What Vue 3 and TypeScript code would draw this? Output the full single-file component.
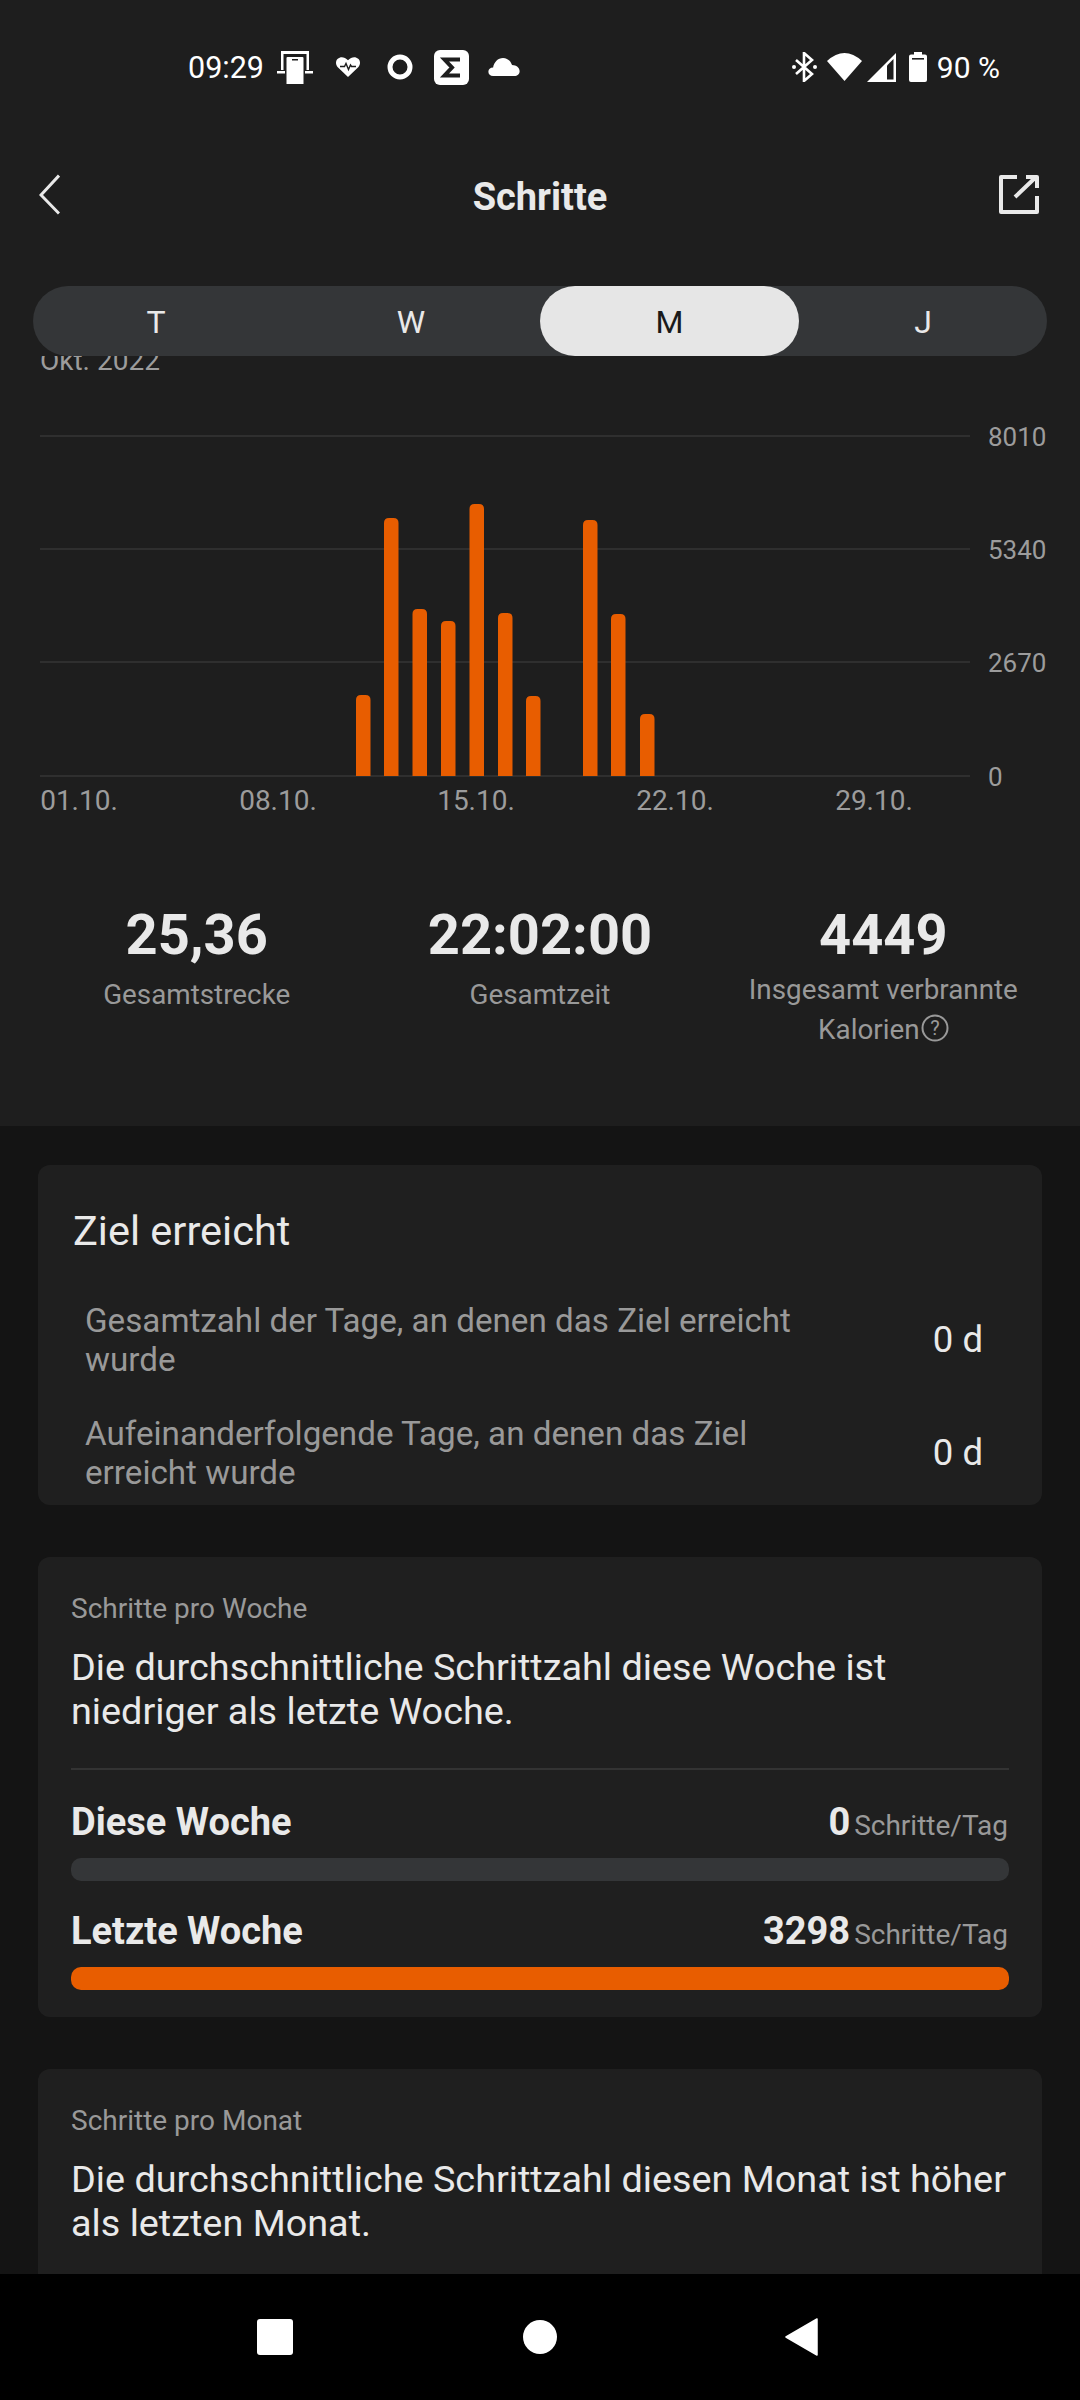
<script setup lang="ts">
const tabs = ['T', 'W', 'M', 'J']
const activeTab = 'M'

const barWidth = 14.5
const baseY = 420
const bars = [
  { x: 356, top: 339 },
  { x: 384, top: 162 },
  { x: 412.5, top: 253 },
  { x: 441, top: 265 },
  { x: 469.5, top: 148 },
  { x: 498, top: 257 },
  { x: 526, top: 340 },
  { x: 583, top: 164 },
  { x: 611, top: 258 },
  { x: 640, top: 358 },
]
const gridLines = [
  { y: 80, label: '8010' },
  { y: 193, label: '5340' },
  { y: 306, label: '2670' },
  { y: 420, label: '0' },
]
const dates = [
  { x: 79, label: '01.10.' },
  { x: 278, label: '08.10.' },
  { x: 476, label: '15.10.' },
  { x: 675, label: '22.10.' },
  { x: 874, label: '29.10.' },
]
function barPath(x: number, top: number) {
  const r = 5
  return `M${x} ${baseY}V${top + r}Q${x} ${top} ${x + r} ${top}H${x + barWidth - r}Q${x + barWidth} ${top} ${x + barWidth} ${top + r}V${baseY}Z`
}

const goalRows = [
  { text: 'Gesamtzahl der Tage, an denen das Ziel erreicht wurde', value: '0 d' },
  { text: 'Aufeinanderfolgende Tage, an denen das Ziel erreicht wurde', value: '0 d' },
]
</script>

<template>
  <div class="phone">
    <div class="top">
      <div class="status">
        <div class="status-left">
          <span class="clock">09:29</span>
          <svg class="i-phone" width="36" height="33" viewBox="0 0 36 33" fill="#fff">
            <path d="M4 0h28v19h-2.500V3H6.500V19H4z" />
            <path d="M0 20h8v2.500H0zM28 20h8v2.500h-8z" />
            <path d="M10.500 6h15a1 1 0 0 1 1 1V33h-17V7a1 1 0 0 1 1-1z" />
            <rect x="15" y="8" width="6" height="1.500" fill="#1e1e1e" />
          </svg>
          <svg class="i-heart" width="24" height="20" viewBox="0 0 24 20">
            <path fill="#fff" d="M12 20 1.800 10.200C-.6 7.700-.6 3.800 1.800 1.700 4.300-.6 8.500-.5 12 3.200 15.500-.5 19.700-.6 22.200 1.700c2.400 2.100 2.400 6 0 8.500z" />
            <path fill="none" stroke="#1e1e1e" stroke-width="1.400" d="M4 9.500h4.500l1.500-3 2.500 6 2-4.500 1 1.500H20" />
          </svg>
          <svg class="i-ring" width="26" height="26" viewBox="0 0 26 26">
            <circle cx="13" cy="13" r="10" fill="none" stroke="#fff" stroke-width="5" />
          </svg>
          <svg class="i-sigma" width="35" height="35" viewBox="0 0 35 35">
            <rect width="35" height="35" rx="6" fill="#fff" />
            <path fill="none" stroke="#1e1e1e" stroke-width="4" d="M26 9.500H10.500l7.500 8-7.500 8H26" />
          </svg>
          <svg class="i-cloud" width="32" height="18" viewBox="0 0 33 19" fill="#fff">
            <path d="M5 19C2 19 0 17 0 14.500S2 10 5 10c1-5.500 5-10 10.500-10C20 0 23.500 3 25 7.500c4.500 0 8 3 8 6.500 0 3-2.500 5-5.500 5z" />
          </svg>
        </div>
        <div class="status-right">
          <svg width="25" height="30" viewBox="0 0 25 30">
            <path fill="none" stroke="#fff" stroke-width="2.600" d="M4 8l16 14-8 7V1l8 7L4 22" />
            <circle cx="2" cy="15" r="2" fill="#fff" />
            <circle cx="23" cy="15" r="2" fill="#fff" />
          </svg>
          <svg class="i-wifi" width="35" height="28" viewBox="0 0 35 28" fill="#fff">
            <path d="M0 8Q17.500-8 35 8L17.500 28z" />
          </svg>
          <svg class="i-signal" width="29" height="29" viewBox="0 0 29 29">
            <path fill="#fff" d="M29 0v29H0z" />
            <path fill="#1e1e1e" d="M26.500 6v20.500H20V12.500z" />
          </svg>
          <svg class="i-battery" width="18" height="30" viewBox="0 0 18 30">
            <path fill="#fff" d="M5 0h8v2.500h3a2 2 0 0 1 2 2V28a2 2 0 0 1-2 2H2a2 2 0 0 1-2-2V4.500a2 2 0 0 1 2-2h3z" />
            <rect x="3" y="6" width="12" height="1.600" fill="#1e1e1e" />
          </svg>
          <span class="percent">90 %</span>
        </div>
      </div>

      <div class="header">
        <svg class="back" width="21" height="41" viewBox="0 0 21 41">
          <path fill="none" stroke="#e9e9e9" stroke-width="3" d="M20 1.500 2 21l18 18.500" />
        </svg>
        <span class="title">Schritte</span>
        <svg class="share" width="40" height="39" viewBox="0 0 40 39" fill="none" stroke="#e9e9e9" stroke-width="4" stroke-linejoin="round">
          <path d="M18 2H2v35h36V21" />
          <path d="M16 22 37 2M27 2h11v11" />
        </svg>
      </div>

      <div class="tabs">
        <div v-for="tab in tabs" :key="tab" class="tab" :class="{ active: tab === activeTab }">{{ tab }}</div>
      </div>

      <svg class="chart" width="1080" height="466" viewBox="0 0 1080 466">
        <text x="40" y="14" class="axis">Okt. 2022</text>
        <template v-for="line in gridLines" :key="line.y">
          <line x1="40" x2="970" :y1="line.y" :y2="line.y" stroke="#2f2f2f" stroke-width="2" />
          <text x="988" :y="line.y + 10" class="axis small">{{ line.label }}</text>
        </template>
        <path v-for="bar in bars" :key="bar.x" :d="barPath(bar.x, bar.top)" fill="#e85d00" />
        <text v-for="date in dates" :key="date.x" :x="date.x" y="454" text-anchor="middle" class="axis">{{ date.label }}</text>
      </svg>

      <div class="stats">
        <div class="stat">
          <div class="stat-value">25,36</div>
          <div class="stat-label">Gesamtstrecke</div>
        </div>
        <div class="stat">
          <div class="stat-value">22:02:00</div>
          <div class="stat-label">Gesamtzeit</div>
        </div>
        <div class="stat">
          <div class="stat-value">4449</div>
          <div class="stat-label">
            Insgesamt verbrannte<br />Kalorien<svg class="help" width="28" height="28" viewBox="0 0 28 28">
              <circle cx="14" cy="14" r="12.500" fill="none" stroke="#999" stroke-width="2" />
              <text x="14" y="21" text-anchor="middle" class="help-mark">?</text>
            </svg>
          </div>
        </div>
      </div>
    </div>

    <div class="content">
      <section class="card goal">
        <h2 class="goal-title">Ziel erreicht</h2>
        <div v-for="row in goalRows" :key="row.text" class="goal-row">
          <p class="goal-text">{{ row.text }}</p>
          <span class="goal-value">{{ row.value }}</span>
        </div>
      </section>

      <section class="card compare">
        <div class="eyebrow">Schritte pro Woche</div>
        <p class="summary">Die durchschnittliche Schrittzahl diese Woche ist niedriger als letzte Woche.</p>
        <div class="divider"></div>
        <div class="metric-row">
          <span class="metric-name">Diese Woche</span>
          <span><b class="metric-num">0</b> <span class="metric-unit">Schritte/Tag</span></span>
        </div>
        <div class="track"></div>
        <div class="metric-row next">
          <span class="metric-name">Letzte Woche</span>
          <span><b class="metric-num">3298</b> <span class="metric-unit">Schritte/Tag</span></span>
        </div>
        <div class="track"><div class="fill"></div></div>
      </section>

      <section class="card compare last">
        <div class="eyebrow">Schritte pro Monat</div>
        <p class="summary">Die durchschnittliche Schrittzahl diesen Monat ist höher als letzten Monat.</p>
      </section>
    </div>

    <div class="navbar">
      <svg width="36" height="36" viewBox="0 0 36 36"><rect width="36" height="36" rx="3" fill="#fff" /></svg>
      <svg class="nav-home" width="34" height="34" viewBox="0 0 34 34"><circle cx="17" cy="17" r="17" fill="#fff" /></svg>
      <svg class="nav-back" width="33" height="38" viewBox="0 0 33 38"><path d="M32 1v36L1 19z" fill="#fff" stroke="#fff" stroke-linejoin="round" stroke-width="1.500" /></svg>
    </div>
  </div>
</template>

<style>
html,
body {
  background: #000;
}
</style>

<style scoped>
.phone {
  width: 1080px;
  height: 2400px;
  display: flex;
  flex-direction: column;
  overflow: hidden;
  background: #141414;
  color: #e9e9e9;
  font-family: Roboto, "Liberation Sans", sans-serif;
}
.top {
  background: #1e1e1e;
  height: 1126px;
  flex: none;
}
.status {
  height: 134px;
  padding: 0 80px 0 188px;
  box-sizing: border-box;
  display: flex;
  align-items: center;
  justify-content: space-between;
  color: #fff;
}
.status-left,
.status-right {
  display: flex;
  align-items: center;
}
.clock {
  font-size: 30.5px;
  width: 89px;
}
.i-heart {
  margin-left: 23px;
}
.i-ring {
  margin-left: 27px;
}
.i-sigma {
  margin-left: 21px;
}
.i-cloud {
  margin-left: 19px;
}
.status-right svg {
  flex: none;
}
.i-wifi {
  margin-left: 10px;
}
.i-signal {
  margin-left: 5px;
}
.i-battery {
  margin-left: 13px;
}
.percent {
  font-size: 30px;
  margin-left: 10px;
}
.header {
  height: 126px;
  padding: 0 41px;
  display: grid;
  grid-template-columns: 1fr auto 1fr;
  align-items: center;
}
.back {
  margin: 0 0 5px -2px;
}
.share {
  justify-self: end;
  margin-bottom: 5px;
}
.title {
  font-size: 38px;
  font-weight: 700;
}
.tabs {
  margin: 26px 33px 0;
  height: 70px;
  border-radius: 35px;
  background: #343638;
  display: grid;
  grid-template-columns: 246px 261px 259px 1fr;
}
.tab {
  display: flex;
  align-items: center;
  justify-content: center;
  font-size: 32px;
  padding-top: 2px;
  border-radius: 35px;
}
.tab:nth-child(2) {
  padding-left: 3px;
}
.tab.active {
  background: #e6e6e6;
  color: #1a1a1a;
}
.chart {
  display: block;
}
.axis {
  fill: #9c9c9c;
  font-size: 28px;
  font-family: Roboto, "Liberation Sans", sans-serif;
}
.axis.small {
  font-size: 26px;
}
.stats {
  display: grid;
  grid-template-columns: repeat(3, 1fr);
  margin: 79px 0 0;
  padding: 0 25px;
  text-align: center;
}
.stat-value {
  font-size: 56px;
  font-weight: 700;
  line-height: 68px;
}
.stat-label {
  margin-top: 6px;
  font-size: 27.8px;
  line-height: 40px;
  color: #999;
}
.stat:last-child .stat-label {
  margin-top: 1px;
}
.help {
  vertical-align: -3px;
  margin-left: 1px;
}
.help-mark {
  fill: #999;
  font-size: 20px;
  font-family: Roboto, "Liberation Sans", sans-serif;
}
.content {
  flex: 1;
  min-height: 0;
  overflow: hidden;
  padding: 39px 38px 0;
  display: flex;
  flex-direction: column;
  gap: 52px;
}
.card {
  background: #1f1f1f;
  border-radius: 12px;
  flex: none;
}
.goal {
  height: 340px;
  padding: 42px 38px 0 35px;
  box-sizing: border-box;
}
.goal-title {
  margin: 0 0 46px;
  font-size: 41.5px;
  font-weight: 400;
  line-height: 48px;
}
.goal-row {
  display: flex;
  align-items: center;
  justify-content: space-between;
  padding: 0 0 0 12px;
  margin-bottom: 35px;
}
.goal-text {
  margin: 0;
  width: 740px;
  font-size: 33.2px;
  line-height: 39px;
  color: #999;
}
.goal-value {
  font-size: 36.5px;
  margin-right: 21px;
  margin-bottom: 2px;
}
.compare {
  padding: 36px 33px 27px;
}
.compare.last {
  padding-bottom: 80px;
}
.eyebrow {
  font-size: 28px;
  line-height: 32px;
  color: #999;
}
.summary {
  margin: 20px 0 0;
  font-size: 37.8px;
  line-height: 44px;
}
.divider {
  height: 2px;
  margin-top: 35px;
  background: #333;
}
.metric-row {
  display: flex;
  align-items: baseline;
  justify-content: space-between;
  line-height: 48px;
  margin-top: 28px;
  padding-right: 1px;
}
.metric-row.next {
  margin-top: 26px;
}
.metric-name {
  font-size: 38px;
  font-weight: 700;
}
.metric-num {
  font-size: 38px;
  font-weight: 700;
}
.metric-unit {
  font-size: 28px;
  color: #999;
}
.track {
  height: 23px;
  margin-top: 4px;
  border-radius: 10px;
  background: #343638;
  overflow: hidden;
}
.fill {
  height: 100%;
  width: 100%;
  background: #e85d00;
}
.navbar {
  height: 126px;
  flex: none;
  background: #000;
  display: flex;
  align-items: center;
  padding-left: 257px;
}
.nav-home {
  margin-left: 230px;
}
.nav-back {
  margin-left: 228px;
}
</style>
